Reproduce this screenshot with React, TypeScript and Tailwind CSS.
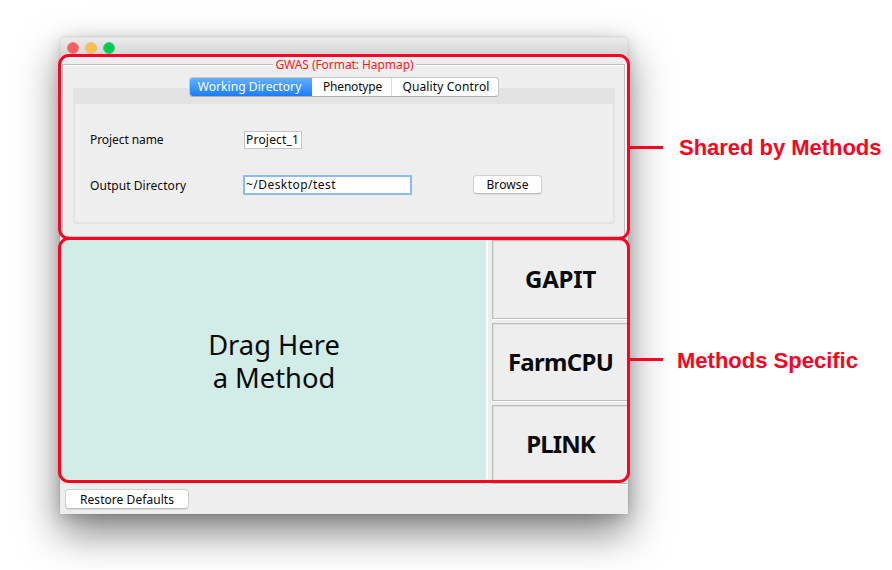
const ui = "font-['Noto_Sans','Open_Sans',sans-serif] text-[#0a0a0a] whitespace-nowrap";
const button =
  'flex items-center justify-center rounded-[4px] border border-[#cfcfcf] border-b-[#bcbcbc] bg-white text-[12px] leading-none shadow-[0_1px_1px_rgba(0,0,0,0.08)]';

function TitleBar() {
  return (
    <div className="flex h-5 items-center gap-[6px] rounded-t-[5px] border-t border-[#e4e4e4] bg-gradient-to-b from-[#ebebeb] to-[#d3d3d3] pl-[7px]">
      <span className="size-[12px] rounded-full border border-[#ec8286] bg-[#fc5b5f]" />
      <span className="size-[12px] rounded-full border border-[#eec07a] bg-[#fdbc4b]" />
      <span className="size-[12px] rounded-full border border-[#4cc479] bg-[#05ca50]" />
    </div>
  );
}

function Tabs() {
  return (
    <div className="relative flex h-5 w-[310px] overflow-hidden rounded-[4px] border border-[#c6c6c6] border-b-[#b0b0b0] bg-white text-[12px] leading-[18px]">
      <div className="-my-px -ml-px w-[123px] bg-gradient-to-b from-[#67b2fb] to-[#0d7bf8] pr-[2px] text-center leading-5 tracking-[0.08px] text-white">
        Working Directory
      </div>
      <div className="w-20 border-r border-[#dedede] pl-[2px] text-center tracking-[-0.2px]">Phenotype</div>
      <div className="flex-1 pl-[2px] text-center tracking-[0.15px]">Quality Control</div>
    </div>
  );
}

function SharedPanel() {
  return (
    <div className="h-[183px] px-[2px] pt-[7px]">
      <fieldset className="relative h-[173px] w-[563px] border border-[#bdbdbd] shadow-[1px_1px_0_white,inset_1px_1px_0_white]">
        <div className="absolute -top-[9px] left-[210px] w-[143px] bg-[#eee] text-center text-[12px] leading-[18px] tracking-[-0.06px] text-[#ff1a1a]">
          GWAS (Format: Hapmap)
        </div>
        <div className="ml-[10px] mt-[23px] h-[136px] w-[542px] rounded-[3px] border-2 border-[#e3e3e3]">
          <div className="-mt-[13px] flex h-[27px] justify-center">
            <Tabs />
          </div>
          <div className="absolute left-[12px] top-[25px] -z-10 h-[14px] w-[538px] bg-[#e3e3e3]" />
          <div className="mt-[25px] flex h-[21px] items-center pl-[15px] text-[12px]">
            <span className="w-[154px] tracking-[-0.08px]">Project name</span>
            <span className="flex h-[18px] w-[58px] items-center border border-[#c5c5c5] bg-white pl-[1px] tracking-[0.2px]">Project_1</span>
          </div>
          <div className="mt-[24px] flex h-[21px] items-center pl-[15px] text-[12px]">
            <span className="w-[153px] pt-[2px] tracking-[0.06px]">Output Directory</span>
            <span className="flex h-5 w-[169px] items-center rounded-[1px] border-2 border-[#8bbcf0] bg-white pl-[1px] tracking-[0.45px]">~/Desktop/test</span>
            <span className={`${button} ml-[61px] h-[19px] w-[69px] tracking-[0.1px]`}>Browse</span>
          </div>
        </div>
      </fieldset>
    </div>
  );
}

function Method({ name, spacing }: { name: string; spacing: string }) {
  return (
    <div className={`flex h-[79px] items-center justify-center border border-r-0 border-[#bdbdbd] pb-px text-[24px] font-bold shadow-[inset_1px_1px_0_#e0e0e0,0_1px_0_white] ${spacing}`}>
      {name}
    </div>
  );
}

function Annotation({ box, line, label, text }: { box: string; line: string; label: string; text: string }) {
  return (
    <>
      <div className={`absolute left-[58px] w-[572px] rounded-[11px] border-[3px] border-[#fb0421] ${box}`} />
      <div className={`absolute left-[629px] h-[3px] w-[34px] bg-[#fb0421] ${line}`} />
      <div className={`absolute whitespace-nowrap font-['Liberation_Sans',sans-serif] text-[22px] font-bold leading-6 text-[#fb0421] ${label}`}>
        {text}
      </div>
    </>
  );
}

export default function App() {
  return (
    <main className={`relative h-[570px] w-[892px] overflow-hidden bg-white pl-[60px] pt-[37px] ${ui}`}>
      <section className="isolate h-[477px] w-[568px] rounded-t-[5px] bg-[#eee] shadow-[0_18px_40px_rgba(0,0,0,0.5),0_3px_14px_rgba(0,0,0,0.14),0_0_1px_rgba(0,0,0,0.4)]">
        <TitleBar />
        <SharedPanel />
        <div className="flex h-[244px]">
          <div className="flex w-[428px] items-center justify-center border-r-2 border-white bg-[#d2ece7] pb-[2px] pl-[2px] text-center text-[27.3px] leading-[33px]">
            <div>
              <div>Drag Here</div>
              <div>a Method</div>
            </div>
          </div>
          <div className="ml-1 flex w-[136px] flex-col gap-1">
            <Method name="GAPIT" spacing="tracking-[-0.2px]" />
            <Method name="FarmCPU" spacing="tracking-[-0.7px]" />
            <Method name="PLINK" spacing="tracking-[-0.9px]" />
          </div>
        </div>
        <footer className="flex h-[30px] items-center pl-[5px]">
          <button className={`${button} h-5 w-[124px] pt-[2px] tracking-[0.05px]`}>Restore Defaults</button>
        </footer>
      </section>
      <Annotation box="top-[54px] h-[186px]" line="top-[146px]" label="left-[679px] top-[136px] tracking-[-0.03px]" text="Shared by Methods" />
      <Annotation box="top-[237px] h-[246px]" line="top-[358px]" label="left-[677px] top-[349px]" text="Methods Specific" />
    </main>
  );
}
